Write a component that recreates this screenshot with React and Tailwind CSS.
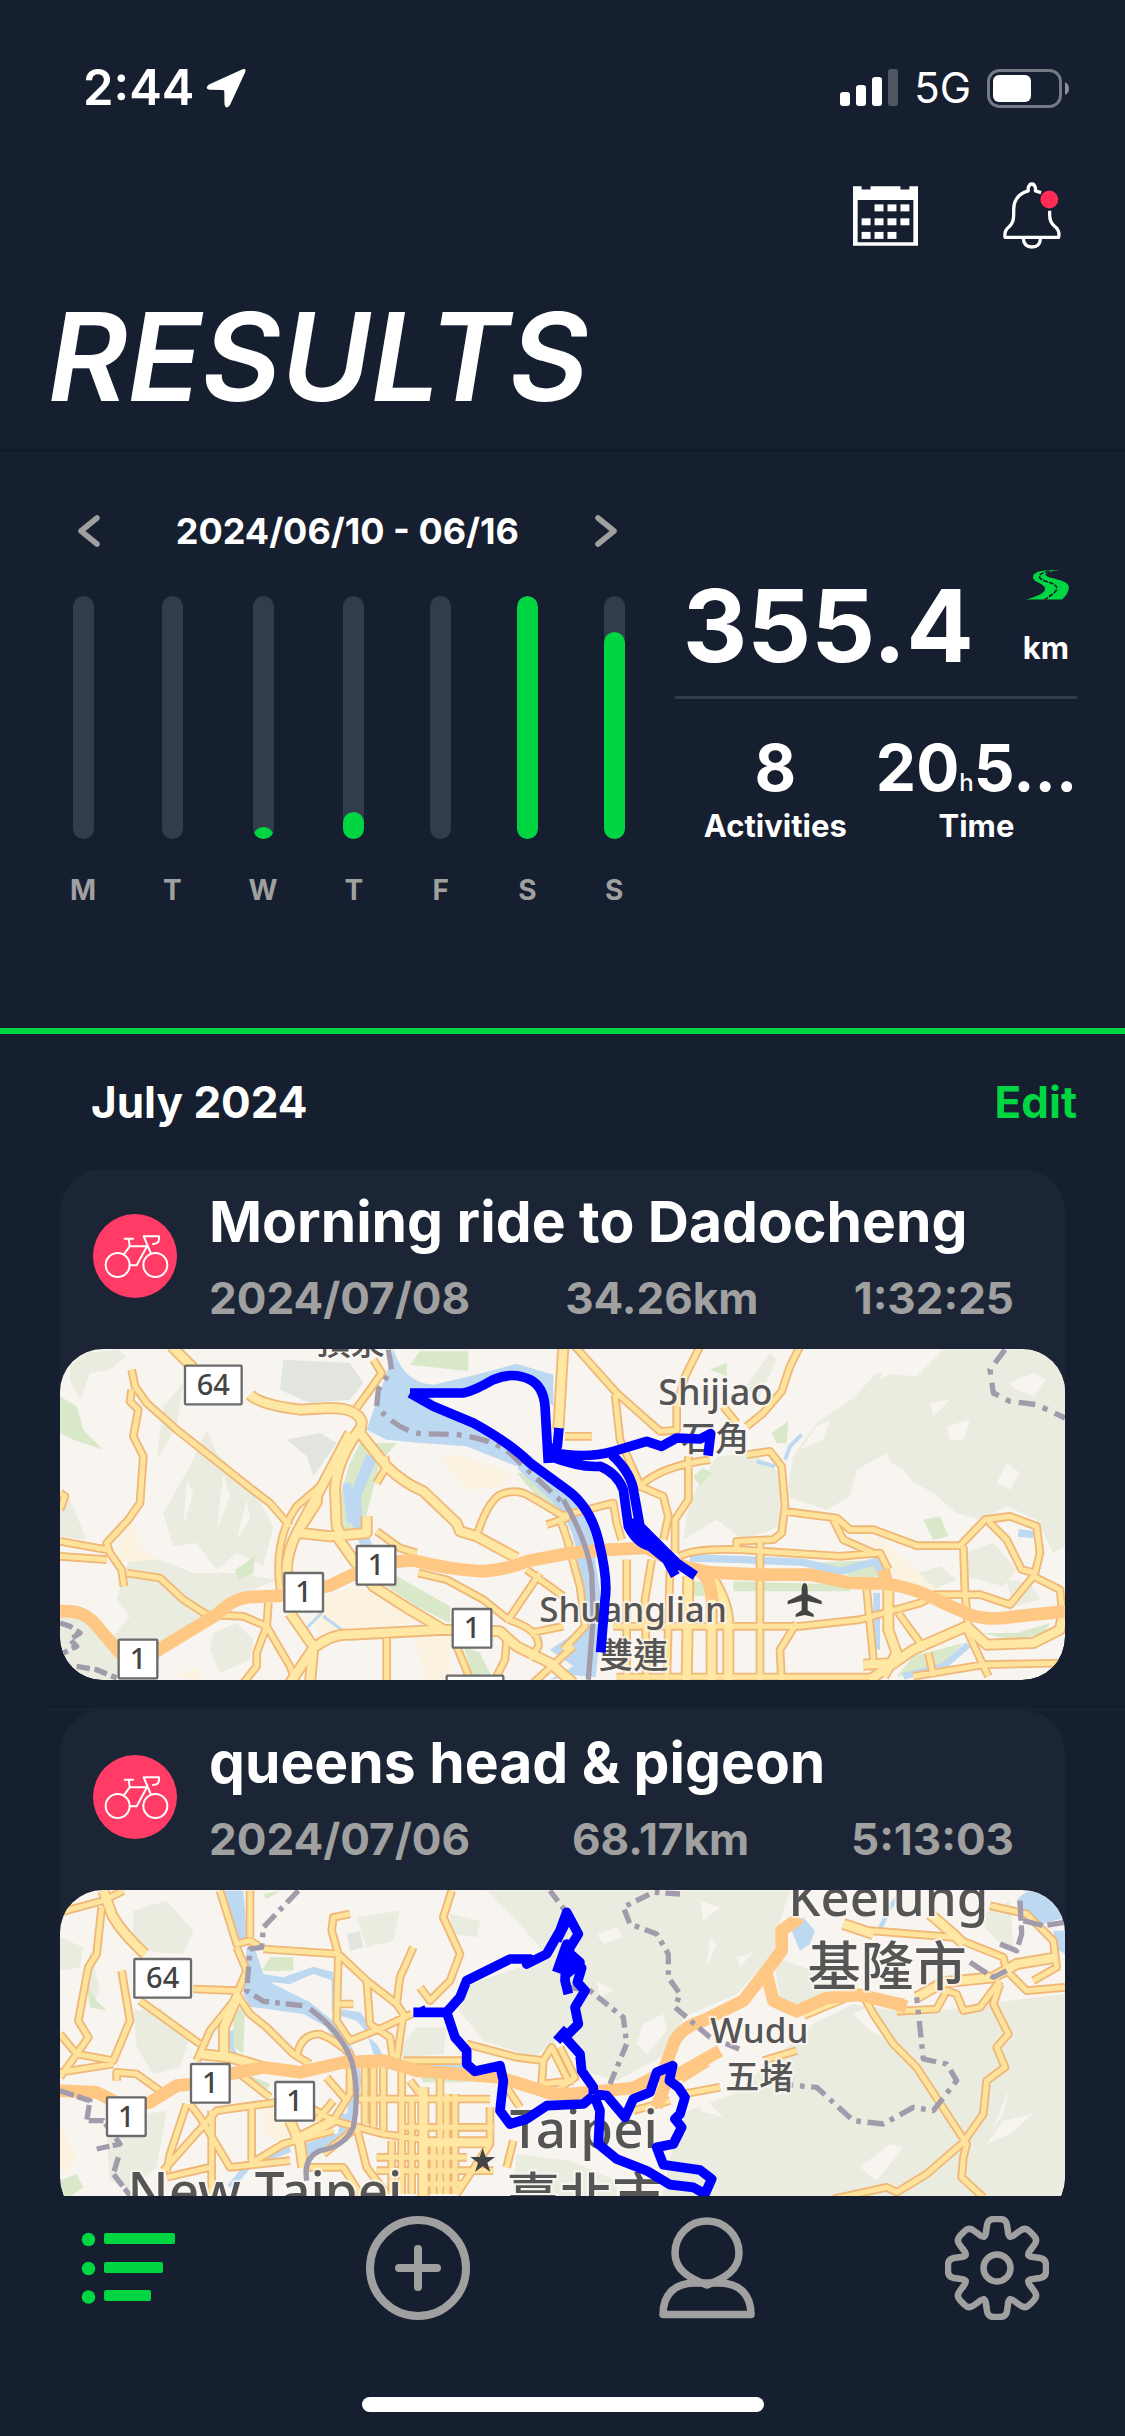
const week = [
  { day: 'M', value: 0 },
  { day: 'T', value: 0 },
  { day: 'W', value: 5 },
  { day: 'T', value: 11 },
  { day: 'F', value: 0 },
  { day: 'S', value: 100 },
  { day: 'S', value: 85 },
]

const dadochengMap = {
  wood: [
    'M30 500 L60 480 L110 600 L30 590Z M60 80 L110 40 L200 30 L230 50 L180 90 L120 100 L90 180 L60 120Z',
    'M340 520 L420 380 L470 270 L500 340 L560 400 L620 470 L670 560 L640 680 L560 640 L500 690 L440 610 L370 620Z',
    'M240 650 L330 660 L430 700 L560 700 L680 720 L560 770 L430 870 L330 930 L320 1020 H60 L30 980 V830 H100 L180 900 L240 830 L200 780Z',
    'M490 880 L560 850 L610 900 L600 960 L510 1000 L480 930Z M320 360 L340 200 L400 130 L380 260Z',
    'M2410 175 L2480 100 L2600 110 L2680 30 H3045 V620 L3010 640 L2960 540 L2870 500 L2790 540 L2720 520 L2650 460 L2540 400 L2510 340 L2420 390 L2400 470 L2330 510 L2210 470 L2230 350 L2300 250Z',
    'M1900 600 L1920 480 L2000 350 L2110 340 L2190 400 L2190 560 L2080 600 L2000 540Z M2080 150 L2160 40 L2180 60 L2120 190Z',
    'M2740 640 L2830 610 L2900 690 L2860 740 L2750 710Z M2610 700 L2670 680 L2720 720 L2650 750Z M2870 720 L2940 730 L2970 780 L2890 800Z',
  ],
  clearing: [
    'M2510 60 L2560 50 L2540 90 L2490 120Z M2875 130 L2950 100 L2990 120 L2950 170 L2900 150Z',
    'M2510 360 L2560 390 L2600 440 L2660 470 L2600 470 L2530 420Z M2690 260 L2760 240 L2740 300 L2700 300Z',
    'M2300 260 L2340 240 L2320 300 L2250 330Z M2870 370 L2910 400 L2880 450 L2840 430Z M2640 190 L2700 180 L2650 230Z',
    'M410 420 L430 460 L400 560Z M520 400 L540 470 L500 570Z M590 480 L600 540 L560 600Z',
  ],
  urban: ['M700 60 L900 70 L940 130 L900 180 L780 190 L690 150Z', 'M710 300 L810 280 L860 310 L790 410 L770 350Z'],
  sand: [
    'M210 560 L250 550 L270 620 L320 660 L200 670Z',
    'M1170 350 L1220 345 L1390 400 L1350 440 L1250 450Z',
    'M800 780 L920 740 L1130 840 L900 880 L800 900Z M1090 890 H1200 V1020 H1130Z M380 1010 L445 980 V1020Z',
    'M2430 580 L2500 600 L2660 750 L2560 740Z',
  ],
  park: [
    'M1110 35 H1255 V95 L1080 75Z',
    'M30 170 L80 200 L100 270 L160 330 L70 300 L30 280Z',
    'M555 690 L615 650 L610 700 L565 720Z',
    'M930 310 L1040 310 L990 370 L940 560 L880 570 L870 470 L900 370Z',
    'M1040 710 L1200 800 V850 L1100 800 L1010 740Z M1240 920 L1290 940 L1330 1020 H1270Z',
    'M1400 400 L1440 400 L1550 520 L1520 540Z',
    'M1980 90 L2030 70 V110Z M2165 280 L2215 245 L2210 310 L2180 310Z',
    'M1930 410 L1960 385 L1985 400 L1950 440Z M2620 540 L2670 530 L2695 590 L2650 600Z',
    'M1910 730 L1980 720 V770 H1920Z M2050 725 L2400 735 V755 H2050Z M2270 670 L2490 660 V710 L2420 715Z',
    'M2800 880 L2900 880 L3000 850 L2980 885 L2880 900Z M2590 950 L2740 910 L2660 990 L2540 1010Z',
  ],
  waterFill: [
    'M1030 27 Q1060 130 1150 135 Q1270 110 1400 72 L1510 105 L1510 200 L1485 180 Q1470 110 1390 110 L1250 165 L1140 170 L1180 215 L1300 260 L1440 370 L1400 380 L1250 320 L1110 310 L1010 300 L950 270 L985 170 L1010 100Z',
    'M1500 930 L1560 890 L1620 860 L1620 1000 L1500 1020 L1570 980Z',
  ],
  waterLines: [
    ['M1420 365 L1530 470 Q1610 560 1610 680 L1630 800 L1610 1010', 55],
    ['M965 350 L915 470 L920 540 L950 620', 34],
    ['M890 430 L905 550', 26],
    ['M1920 655 L2080 660 L2260 668 L2370 695 L2480 665 L2500 720', 22],
    ['M2480 760 L2480 930', 20],
    ['M2560 1010 L2680 980 L2755 915', 20],
    ['M2255 285 L2220 320 L2205 360 M2120 365 L2175 380', 12],
    ['M2905 580 L2950 585', 22],
    ['M815 820 L770 865 M820 830 L875 870', 9],
  ],
  trunk: [
    'M30 815 C90 810 120 830 150 870 L210 940 H310 L500 825 Q550 775 600 772 L700 768 L840 738 L980 670 L1090 662 Q1200 690 1300 695 Q1370 690 1430 665 L1560 640 L1680 630 L1790 625 L1900 680 L1980 698 L2130 705 L2280 705 L2400 730 L2510 732 Q2600 745 2680 790 L2760 825 Q2820 845 2900 830 L3045 815',
    'M1940 690 Q1985 710 1985 780 M2515 740 L2500 690',
  ],
  major: [
    'M600 165 Q630 195 750 210 L840 205 Q920 205 935 245 L930 290',
    'M935 260 Q860 360 855 450 L860 560 L880 600',
    'M750 580 L840 590 L950 580 V530',
    'M930 280 L1010 380 Q1060 430 1120 455 L1220 550 L1230 575 L1280 590 L1400 655',
    'M365 20 L430 85',
    'M860 590 L910 660 L970 740 L1080 810 L1180 870',
    'M790 925 Q850 880 900 885 L1180 870 L1350 875 L1400 920 L1500 970 L1570 1030',
    'M720 820 L790 920 L780 1030 M790 925 L720 1030',
    'M710 700 Q710 640 740 580 L810 450 L900 280',
    'M1540 20 L1525 270',
    'M1990 720 Q2035 790 2035 860 V1030 M1915 710 L1910 1030 M1985 780 V1030',
    'M2460 1020 L2590 930 L2750 860 L2810 915 L2950 910 L3030 870 L3040 820',
    'M2515 740 L2515 870 L2540 940 L2500 1010 M2540 970 L2440 975',
  ],
  minor: [
    'M245 90 L255 140 L290 190 L380 270 L620 460 L660 490 L720 560',
    'M245 150 L240 185 L265 210 L250 290 L280 350 L270 490 L235 540 L170 610 L180 640 L215 690 L222 740',
    'M30 605 L170 630 M30 650 L170 660 M30 460 L45 470 L30 510',
    'M230 700 L330 715 L400 780 L470 825 L580 830 L650 860 L720 980 L740 1030',
    'M655 790 L650 860 L620 940 L620 980 L580 1030',
    'M690 750 Q670 600 740 500 L810 440 L805 490 L760 560',
    'M970 60 L995 100 L960 150 L920 205',
    'M1005 350 L1010 380 L980 430',
    'M980 575 L1050 625 L1100 640',
    'M1280 590 Q1310 490 1350 465 Q1400 445 1440 470 L1550 535 L1490 555 M1530 540 L1560 620',
    'M1105 700 L1190 720 L1300 780 L1375 840 M1375 840 L1470 700 M1430 690 L1540 770',
    'M1375 840 Q1470 870 1465 920 L1440 960 M1370 900 L1365 960 L1330 1030 M1450 1030 L1570 920 M1440 880 L1540 860',
    'M1220 920 L1265 1030 M1010 895 V1030',
    'M1575 20 L1700 160 L1830 275 L1880 272 V200 L1905 110 L1950 20',
    'M1695 165 L1710 300 L1770 435 M1545 290 H1625',
    'M2250 20 L2220 80 L2195 155 L2140 220 L2090 260 M2020 200 L2060 250',
    'M2090 345 L2160 335 L2195 380 L2205 500 L2195 580 L2170 600 L2060 605 V630',
    'M1980 360 Q1830 380 1770 440 L1840 470 L1855 530 L1840 600 M1915 350 V480 L1875 540 V640',
    'M1530 530 L1690 490 L1700 550 L1715 600 M1540 560 L1590 740 L1605 860 L1540 930',
    'M1890 650 Q1930 625 2070 630 L2370 650 L2490 640 L2515 690 M2130 600 V1030',
    'M2205 515 L2280 525 L2360 535 L2400 570 L2470 570 L2600 618 H2730 L2805 540 L2880 530 L2960 560 L2970 640 L2955 700 L2915 690 L2870 600 L2815 545',
    'M2350 540 L2380 600 L2470 640 M2740 620 L2745 760 L2755 860',
    'M2650 765 H2790 L2880 795 L2950 710 L3030 750 L3035 800',
    'M1730 660 V1030 M1805 660 L1785 780 L1790 1030 M1860 690 L1850 1030',
    'M1690 860 H2250 L2430 840 L2610 790 L2650 770 M1700 1012 H2480',
    'M2240 850 L2190 930 L2195 1030 M2450 750 L2470 960',
    'M2545 820 L2625 930 M2750 870 L2815 1010 M2590 1010 L2800 975 L3045 970 M2635 940 L2650 1010',
  ],
  borders: [
    ['M1015 30 L1025 90 L985 150 L980 200 Q1040 270 1110 282 L1220 285 Q1350 300 1400 360 L1550 500', '60 24 14 24'],
    ['M1540 480 Q1610 600 1625 700 L1630 830 L1615 1020', 'none'],
    ['M2865 30 L2820 90 L2830 160 L2880 185 L2960 195 L3045 235', '50 24 16 24'],
    ['M30 850 L60 860 L90 880 L60 900 L80 920 L40 940 M80 980 L140 990 L200 1015', '40 14'],
  ],
  route: [
    'M1080 160 L1240 160 Q1270 155 1330 120 Q1390 95 1440 120 Q1480 140 1485 200 L1495 370',
    'M1080 160 L1150 200 L1270 250 Q1380 310 1440 370 L1550 450 Q1620 500 1645 600 Q1675 720 1665 780 L1652 938',
    'M1527 265 L1522 320 L1495 335 Q1600 360 1690 335 L1790 305 L1835 320 L1880 295 L1950 298 L1982 282 L1974 348',
    'M1500 350 Q1590 385 1650 380 Q1700 400 1720 450 L1735 560 Q1760 610 1800 620 L1850 660 L1876 708',
    'M1685 345 Q1745 400 1752 460 L1770 560 L1830 620 L1880 670 L1936 708',
    'M1740 540 L1765 600 L1820 632 L1870 680',
    'M1740 560 L1790 610 L1860 650 L1885 690',
  ],
  badges: [
    { x: 402, y: 75, w: 176, text: '64' },
    { x: 700, y: 697, w: 122, text: '1' },
    { x: 917, y: 616, w: 122, text: '1' },
    { x: 1205, y: 805, w: 122, text: '1' },
    { x: 203, y: 897, w: 122, text: '1' },
    { x: 1187, y: 1005, w: 176, text: '' },
  ],
  labels: [
    { x: 1996, y: 197, size: 108, text: 'Shijiao' },
    { x: 1996, y: 335, size: 102, text: '石角' },
    { x: 1749, y: 848, size: 105, text: 'Shuanglian' },
    { x: 1750, y: 985, size: 105, text: '雙連' },
    { x: 902, y: 46, size: 102, text: '頂泉' },
  ],
  marks: ['M2264 730 q8 0 9 20 v14 l42 20 v10 l-42 -10 v28 l18 12 v8 l-27 -6 l-27 6 v-8 l18 -12 v-28 l-42 10 v-10 l42 -20 v-14 q1 -20 9 -20Z'],
}

const pigeonMap = {
  wood: [
    'M250 90 L350 60 L430 150 L400 220 L310 215 L250 160Z M920 110 L1050 90 L1030 180 L950 200Z M1200 100 L1290 120 L1280 170 L1210 160Z',
    'M250 390 L330 380 L420 470 L390 560 L310 580 L260 500Z M30 170 L100 200 L90 260 L30 270Z M120 210 L150 320 L130 380 L100 300Z',
    'M170 780 L290 700 L350 690 L320 860 L240 930 L180 900Z M1050 500 L1100 440 L1190 440 L1180 520 L1060 530Z',
    'M1220 380 L1260 310 L1440 250 L1500 230 L1545 330 L1560 450 L1450 530 L1300 480Z',
    'M1310 30 H2220 L2190 120 L2170 220 L2060 340 L1900 410 L1850 520 L1700 600 L1600 570 L1530 400 L1470 200 L1400 120Z',
    'M1820 1020 L1890 700 L2050 640 L2290 430 L2410 370 L2600 400 L2800 370 L3045 340 V1020Z',
    'M2170 230 L2260 260 L2430 330 L2230 370 L2190 350Z M1400 820 L1560 840 L1700 900 V1020 H1380Z',
    'M2780 110 L2880 60 L2890 200 L2840 180Z',
  ],
  clearing: [
    'M1640 160 L1700 140 L1720 170 L1660 190Z M1980 170 L2000 190 L1970 260Z M2060 230 L2110 215 L2070 260Z',
    'M1780 430 L1840 400 L1850 450 L1790 520 L1760 490Z M1640 300 L1690 330 L1650 350Z',
    'M2430 860 L2520 790 L2560 800 L2480 900Z M2810 790 L2860 720 L2950 700 L2880 760Z M1960 650 L2020 710 L1950 690Z',
    'M2410 400 L2450 380 L2500 470 L2460 450Z M2880 620 L2860 700 L2830 740Z M1950 60 L2010 80 L1960 120Z',
  ],
  urban: ['M890 160 L930 150 L940 200 L900 210Z'],
  sand: ['M30 720 L80 830 L50 880 L30 870Z', 'M640 680 L730 700 L700 790 L640 760Z'],
  park: [
    'M660 230 H730 V270 H635Z M640 40 L690 30 L650 55Z',
    'M550 390 L585 380 L580 520 L550 500Z',
    'M110 310 L140 360 L170 390 L120 380Z M30 900 L80 880 L100 920 L60 948 H30Z',
    'M590 580 L660 610 L650 630Z M1110 590 H1260 L1250 605 H1120Z',
  ],
  waterFill: [
    'M515 30 H580 L592 180 L562 182Z',
    'M590 200 L615 205 L640 280 L700 290 L790 258 L850 275 V300 L790 280 L720 310 L660 305 L780 365 L860 430 L850 450 L760 400 L600 378 L580 340Z',
    'M865 385 L930 395 L960 430 L950 455 L920 420 L870 405Z M955 470 L980 490 L1005 535 L970 520Z',
    'M2900 60 Q2920 30 2960 28 H3030 L3045 110 L2980 130 Q2900 110 2900 60Z M3010 150 L3045 150 V220 L3020 205Z',
    'M2220 140 L2260 110 L2295 150 L2280 190 L2250 210Z',
  ],
  waterLines: [
    ['M840 430 Q915 520 918 600 L905 710', 30],
    ['M890 700 L880 770 L800 795 L760 810', 34],
    ['M720 805 L640 835 L590 860 L540 920', 20],
    ['M850 290 L850 390', 10],
    ['M545 450 L545 500 L570 550', 12],
    ['M2550 40 L2520 80 L2490 145', 14],
    ['M1080 558 L1260 560', 12],
  ],
  trunk: [
    'M30 630 L140 635 L230 680 L300 665 L380 615 L430 610 L540 580 L640 560 L750 575 L880 545 L1000 540 L1100 570 L1350 590 L1500 638 L1560 640 L1750 622 L1840 575 L1870 490 Q1890 440 1960 420 L2080 360 L2150 270 L2195 210 V150 L2250 110',
    'M1820 680 L1850 600 L2010 510 M1890 590 L1970 540',
    'M2150 280 L2170 360 L2240 392 L2330 352 L2430 342 L2570 378',
  ],
  major: [
    'M160 30 L185 100 Q210 150 285 220',
    'M450 520 L540 530 L640 560 M565 340 L522 440 L522 520',
    'M2380 130 L2470 160 M2640 100 L2710 160 L2740 190',
    'M2600 350 L2680 305 L2830 290 L2900 250 L3020 230',
    'M2430 345 L2560 372 M2260 400 L2380 350',
    'M720 720 L750 790 L760 860 M730 780 L850 720',
    'M1120 620 V950 M1110 785 H1320',
  ],
  minor: [
    'M30 95 L160 60 L220 30 M155 80 L140 220 L115 260 L85 420 L115 470 L80 520 L30 590',
    'M30 460 L80 520 L190 540 L240 420 L215 270 M270 360 L450 490 M430 325 L560 330',
    'M510 30 L560 190 L600 180 L625 195 M600 30 V170 M560 200 L590 270 L560 340 L600 400 L650 440 L730 520 L780 550',
    'M440 540 L480 450 L560 350 M30 575 L190 550',
    'M900 100 L850 110 L845 150 L865 220 L860 420 L900 480 L1000 440 L1085 400',
    'M640 205 L865 220 L950 300 L1040 370 L1060 400 L1040 540 M865 370 H910',
    'M1090 200 L1050 290 L1040 370 M950 300 L960 430 L1020 470 L1030 540',
    'M1205 30 L1180 110 L1230 220 L1200 300 L1140 360 L1110 320',
    'M740 530 Q750 460 810 460 Q860 480 900 520 V640 L850 720',
    'M200 600 V575 L260 580 L330 630 M420 670 L450 710 L540 860 L720 840',
    'M340 870 L500 690 L680 665 M410 670 L360 820 L350 870 M485 690 V940 M605 680 V840 M350 890 L480 860',
    'M570 580 L660 650 M780 680 L850 720 L1000 760 L1110 775 M600 850 L700 790 L850 750',
    'M760 860 L880 860 L930 940 M820 820 L920 740 L950 860 L1010 940 M850 660 L800 720 M830 590 L890 660',
    'M945 560 V730 M970 560 V740 M1000 560 V750 M1055 570 V940 M1025 780 V940 M1080 600 L1110 640 M1085 660 V940 M1170 560 V940 M1190 640 V940 M1215 640 V940 M1150 790 V940',
    'M920 655 H1320 M1060 740 H1330 M980 830 H1250 M980 870 H1330 M1120 910 H1240 M1320 680 V790 L1220 940 M1390 780 L1370 860',
    'M1060 540 H1240 M1250 490 L1400 530 L1480 540 L1505 500 L1560 610 M1480 540 L1475 610 L1570 600 M1370 620 L1410 680',
    'M1530 500 L1575 590 L1530 620 M1900 640 L2010 620 M2140 540 L2240 510 M1750 690 L1860 660',
    'M2440 345 L2470 400 L2530 490 L2600 560 L2750 790 L2740 830 L2735 890 L2800 950',
    'M2850 310 L2830 370 L2875 460 L2840 500 L2865 560 L2810 600 L2800 700 L2740 785 L2630 880 L2540 935 L2510 920 L2350 955',
    'M2460 150 L2710 170 L2860 230 L2870 270 L2930 330 L3045 320 M2820 75 L2930 100 L3010 180 L3020 260 L2950 300',
    'M2540 392 L2660 385 L2690 330 L2720 340 L2740 390 L2790 380 L2850 300',
  ],
  borders: [
    ['M745 30 L640 140 L635 200 L600 205 L590 330 L640 362 L760 375', '50 18 14 18'],
    ['M780 385 Q870 450 905 540 Q930 640 910 740 Q880 800 810 810 Q760 830 770 900', 'none'],
    ['M1890 40 L1810 35 L1720 80 L1740 130 L1820 160 L1855 220 V290 L1890 340 L1875 380 L1980 470 L2080 510', '44 18 14 18'],
    ['M1500 30 L1560 110 M1560 320 L1620 330 L1720 410 L1730 490 L1680 610', '40 18 14 18'],
    ['M2180 610 L2300 620 L2410 720 L2500 730 L2590 680 L2650 690 L2720 600 L2690 550 L2620 535 L2600 350', '50 20 14 20'],
    ['M2910 60 L2915 160 L2900 210 L2850 190 M2760 245 L2830 290 L2870 270 M2920 120 L2980 135 L3045 125', '60 14'],
    ['M30 630 L120 660 L110 720 L160 720 L210 790 L140 805 M205 830 L190 880 L240 945', '44 10'],
  ],
  route: [
    'M1090 395 L1190 395 L1230 350 L1250 300 L1380 235 L1440 235 L1430 250 L1490 220 L1530 150 L1550 95 L1585 160 L1560 200 L1550 250 L1595 262 L1582 305 L1605 330 L1575 380 L1585 430 L1545 470 L1590 520 L1595 570 L1630 620 V640',
    'M1110 380 L1120 400 M1520 180 L1550 120 M1520 275 L1550 190 L1545 300 L1555 340 M1550 210 L1590 245 L1550 280 M1520 480 L1552 445',
    'M1190 395 L1215 470 L1250 510 V550 L1275 572 L1350 555 L1360 600 L1350 690 L1380 730 L1430 715 L1490 675 L1600 670 L1630 645',
    'M1630 640 L1650 690 L1645 790 L1700 835 L1790 870 L1860 912 L1930 920 L1965 940 L1985 895 L1950 868 L1840 852 L1820 800 L1870 790 L1895 740 L1875 715 L1890 700 L1905 650 L1885 620 L1858 600 L1868 555 L1820 575 L1800 635 L1750 655 L1725 710 L1670 645 L1630 640',
  ],
  badges: [
    { x: 250, y: 232, w: 176, text: '64' },
    { x: 168, y: 647, w: 122, text: '1' },
    { x: 420, y: 547, w: 122, text: '1' },
    { x: 673, y: 601, w: 122, text: '1' },
  ],
  labels: [
    { x: 645, y: 988, size: 159, text: 'New Taipei' },
    { x: 1602, y: 802, size: 159, text: 'Taipei' },
    { x: 1608, y: 1010, size: 159, text: '臺北市' },
    { x: 2515, y: 106, size: 153, text: 'Keelung' },
    { x: 2512, y: 315, size: 159, text: '基隆市' },
    { x: 2128, y: 487, size: 105, text: 'Wudu' },
    { x: 2128, y: 624, size: 102, text: '五堵' },
  ],
  marks: ['M1298 802 l9 27 h28 l-23 17 l9 28 l-23 -17 l-23 17 l9 -28 l-23 -17 h28Z'],
}

const rides = [
  { title: 'Morning ride to Dadocheng', date: '2024/07/08', distance: '34.26km', time: '1:32:25', map: dadochengMap },
  { title: 'queens head & pigeon', date: '2024/07/06', distance: '68.17km', time: '5:13:03', map: pigeonMap },
]

function RouteMap({ map, title }) {
  const all = (list) => list.join(' ')
  return (
    <svg
      viewBox="30 28 3015 993"
      role="img"
      aria-label={`Map of ${title}`}
      className="block w-full h-auto rounded-[43px] bg-[#f8f4f0]"
      fill="none"
      strokeLinejoin="round"
    >
      <path d={all(map.wood)} fill="#e9ecdf" />
      <path d={all(map.clearing)} fill="#f8f4f0" />
      <path d={all(map.urban)} fill="#e1e5de" />
      <path d={all(map.sand)} fill="#fbf3df" />
      <path d={all(map.park)} fill="#d9e8c9" />
      <path d={all(map.waterFill)} fill="#bdd8f1" />
      {map.waterLines.map(([d, w]) => <path key={d} d={d} stroke="#bdd8f1" strokeWidth={w} />)}
      <path d={all(map.minor)} stroke="#f0b878" strokeWidth="26" />
      <path d={all(map.major)} stroke="#f0b878" strokeWidth="36" />
      <path d={all(map.minor)} stroke="#fee39c" strokeWidth="15" />
      <path d={all(map.major)} stroke="#fee8a3" strokeWidth="25" />
      <path d={all(map.trunk)} stroke="#ffc784" strokeWidth="38" />
      {map.borders.map(([d, dash]) => (
        <path key={d} d={d} stroke="#a29bab" strokeWidth="16" strokeDasharray={dash} />
      ))}
      {map.badges.map((b) => (
        <g key={`${b.x}-${b.y}`}>
          <rect x={b.x + 3} y={b.y + 3} width={b.w - 6} height="116" rx="3" fill="#fff" stroke="#6b6b6b" strokeWidth="7" />
          <text x={b.x + b.w / 2} y={b.y + 91} textAnchor="middle" fontSize="87" fill="#444" className="font-['Noto_Sans',sans-serif] font-medium">
            {b.text}
          </text>
        </g>
      ))}
      {map.labels.map((l) => (
        <text
          key={l.text}
          x={l.x}
          y={l.y}
          textAnchor="middle"
          fontSize={l.size}
          fill="#555"
          stroke="#fbf8f4"
          strokeWidth="14"
          strokeOpacity="0.7"
          paintOrder="stroke"
          className="font-['Noto_Sans','Noto_Sans_CJK_TC',sans-serif] font-medium"
        >
          {l.text}
        </text>
      ))}
      <path d={all(map.marks)} fill="#444" />
      <path d={all(map.route)} stroke="#0000ff" strokeWidth="29" />
    </svg>
  )
}

function StatusBar() {
  return (
    <div className="flex h-12 items-center justify-between pl-[83px] pr-14">
      <div className="flex items-center gap-3">
        <span className="text-[49px] leading-12 font-semibold">2:44</span>
        <svg viewBox="0 0 40 40" className="size-10" fill="currentColor">
          <path d="M36 1.400Q41 -.5 39 4.500L24 37Q20 42 18.500 36.500L18.300 23.500Q18.300 22 17 22L4 21.800Q-2 21 3 16.500Z" />
        </svg>
      </div>
      <div className="flex items-center gap-4">
        <svg viewBox="0 0 58 38" className="h-[38px] w-[58px]" fill="currentColor">
          <rect x="0" y="23" width="10" height="14" rx="3" />
          <rect x="16" y="16" width="10" height="21" rx="3" />
          <rect x="32" y="8" width="10" height="29" rx="3" />
          <rect x="48" y="0" width="10" height="37" rx="3" opacity=".25" />
        </svg>
        <span className="text-[42px] leading-12">5G</span>
        <svg viewBox="0 0 82 39" className="h-[39px] w-[82px]">
          <rect x="1.500" y="1.500" width="72" height="36" rx="11" fill="none" stroke="#757b86" strokeWidth="3" />
          <rect x="6" y="6" width="38" height="27" rx="6" fill="#fff" />
          <path d="M78 13Q82 15 82 19.500T78 26Z" fill="#8b909a" />
        </svg>
      </div>
    </div>
  )
}

function CalendarIcon() {
  const cells = [
    [132, 460], [171, 460], [210, 460],
    [93, 502], [132, 502], [171, 502], [210, 502],
    [93, 543], [132, 543], [171, 543],
  ]
  return (
    <svg viewBox="67 405 196 180" className="h-[60px] w-[65px]" fill="currentColor">
      <path fillRule="evenodd" d="M67 405H93V415H120V405H210V415H237V405H263V585H67ZM81 447V574H249V447Z" />
      {cells.map(([x, y]) => <rect key={`${x}-${y}`} x={x} y={y} width="27" height="21" />)}
    </svg>
  )
}

function BellIcon() {
  return (
    <svg viewBox="519 397 175 203" className="h-[67px] w-[58px]" fill="none" stroke="currentColor" strokeWidth="10" strokeLinejoin="round">
      <path d="M634 429L617 424V415Q614 403 606 403Q598 403 595 415V424Q551 437 551 480V497Q551 520 538 532Q521 545 525 565H687Q692 545 676 532Q660 520 660 497V484" />
      <path d="M580 568Q582 594 606 594Q631 594 632 568" />
      <circle cx="659" cy="450" r="27" fill="#ff2d55" stroke="none" />
    </svg>
  )
}

function ArrowIcon({ d }) {
  return (
    <svg viewBox="0 0 22 32" className="h-8 w-[22px]" fill="none" stroke="#a0a0a0" strokeWidth="5.500" strokeLinecap="round" strokeLinejoin="round">
      <path d={d} />
    </svg>
  )
}

function RoadIcon() {
  return (
    <svg viewBox="1157 210 130 90" className="h-[30px] w-[43px]" fill="none">
      <path d="M1258 211C1200 208 1178 216 1178 232C1180 248 1214 250 1215 266C1214 282 1180 292 1157 299H1266C1284 284 1288 268 1286 258C1278 236 1220 236 1216 224C1216 214 1240 212 1258 211Z" fill="#00d542" />
      <path d="M1228 213C1190 220 1190 234 1214 243C1250 252 1262 264 1238 282L1212 301" stroke="#161f2f" strokeWidth="5" strokeDasharray="14 4" />
    </svg>
  )
}

function BikeIcon() {
  return (
    <svg viewBox="24 24 252 252" className="size-21 shrink-0 rounded-full bg-[#ff3b66]" fill="none" stroke="#fff" strokeWidth="6" strokeLinecap="round" strokeLinejoin="round">
      <circle cx="98" cy="177" r="36" />
      <circle cx="211" cy="177" r="36" />
      <path d="M119 98H144M131 98L134 121L116 146M134 121H186L155 178H134M176 91L198 143M176 91H222V99Q221 114 204 114" />
    </svg>
  )
}

function ListIcon() {
  return (
    <svg viewBox="0 0 104 104" className="size-26" fill="currentColor">
      <circle cx="12.500" cy="23.500" r="6.800" />
      <circle cx="12.500" cy="52.500" r="6.800" />
      <circle cx="12.500" cy="81" r="6.800" />
      <rect x="28" y="17" width="71" height="11" rx="2" />
      <rect x="28" y="46" width="59" height="11" rx="2" />
      <rect x="28" y="74" width="47" height="11" rx="2" />
    </svg>
  )
}

function AddIcon() {
  return (
    <svg viewBox="0 0 104 104" className="size-26" fill="none" stroke="currentColor" strokeWidth="8" strokeLinecap="round">
      <circle cx="52" cy="52" r="48" />
      <path d="M33 52H71M52 33V71" />
    </svg>
  )
}

function PersonIcon() {
  return (
    <svg viewBox="0 0 104 104" className="size-26" fill="none" stroke="currentColor" strokeWidth="7.500" strokeLinejoin="round">
      <path d="M52 69C34 62 20 54 20 37A32 32 0 0 1 84 37C84 54 70 62 52 69Z" />
      <path d="M8 98.500C8 80 18 67 40 67H64C86 67 96 80 96 98.500Z" />
    </svg>
  )
}

function GearIcon() {
  return (
    <svg viewBox="-52 -52 104 104" className="size-26" fill="none" stroke="currentColor" strokeWidth="6.500" strokeLinecap="round">
      <circle r="13.500" />
      {[0, 45, 90, 135, 180, 225, 270, 315].map((angle) => (
        <path
          key={angle}
          transform={`rotate(${angle})`}
          d="M-13 -31.500Q-11 -33 -11 -36L-10 -43Q-9 -49 -3 -49H3Q9 -49 10 -43L11 -36Q11 -33 13 -31.500"
        />
      ))}
    </svg>
  )
}

function WeekChart() {
  return (
    <div>
      <div className="flex h-12 items-center justify-between px-2.5">
        <button aria-label="Previous week"><ArrowIcon d="M19 3L3 16L19 29" /></button>
        <span className="text-4xl leading-12 font-bold whitespace-nowrap">2024/06/10 - 06/16</span>
        <button aria-label="Next week"><ArrowIcon d="M3 3L19 16L3 29" /></button>
      </div>
      <div className="mt-[41px] flex justify-between px-0.5">
        {week.map((d, i) => (
          <div key={i} className="flex flex-col items-center">
            <div className="flex h-[243px] w-[21px] items-end overflow-hidden rounded-full bg-[#333c4b]">
              <div className="w-full rounded-t-full bg-[#00d542]" style={{ height: `${d.value}%` }} />
            </div>
            <span className="mt-[31px] text-[28px] leading-10 font-bold text-[#a0a0a0]">{d.day}</span>
          </div>
        ))}
      </div>
    </div>
  )
}

function Totals() {
  return (
    <div className="pt-[63px]">
      <div className="flex justify-between border-b-3 border-[#333c4b] px-2 pb-5">
        <span className="mt-1.5 text-[100px] leading-[100px] font-bold">355.4</span>
        <div className="flex flex-col items-end">
          <RoadIcon />
          <span className="mt-7 text-[31px] leading-10 font-bold">km</span>
        </div>
      </div>
      <div className="mt-[37px] grid grid-cols-2 text-center font-bold">
        <div>
          <div className="text-[64px] leading-16">8</div>
          <div className="mt-1.5 text-[31px] leading-10">Activities</div>
        </div>
        <div>
          <div className="text-[64px] leading-16 whitespace-nowrap">
            20<span className="text-2xl font-medium">h</span>5...
          </div>
          <div className="mt-1.5 text-[31px] leading-10">Time</div>
        </div>
      </div>
    </div>
  )
}

function RideCard({ ride }) {
  return (
    <li className="ml-12 border-b border-[#1d2737] pr-[60px] pb-[29px] pl-3">
      <article className="overflow-hidden rounded-[43px] bg-[#1b2536]">
        <div className="flex items-center gap-8 pt-[21px] pr-[51px] pb-[27px] pl-[33px]">
          <BikeIcon />
          <div className="min-w-0 flex-1">
            <h3 className="text-[57px] leading-16 font-bold whitespace-nowrap">{ride.title}</h3>
            <div className="mt-5 flex justify-between text-[44px] leading-12 font-bold text-[#a0a0a0]">
              <span>{ride.date}</span>
              <span>{ride.distance}</span>
              <span>{ride.time}</span>
            </div>
          </div>
        </div>
        <RouteMap map={ride.map} title={ride.title} />
      </article>
    </li>
  )
}

export default function App() {
  return (
    <div className="flex h-screen flex-col bg-[#161f2f] font-['Inter',sans-serif] text-white">
      <header className="shrink-0 border-b border-[#10161f] pt-16">
        <StatusBar />
        <div className="mt-[70px] flex h-[67px] items-center justify-end gap-[85px] pr-16">
          <button aria-label="Calendar"><CalendarIcon /></button>
          <button aria-label="Notifications"><BellIcon /></button>
        </div>
        <h1 className="mt-12 pb-[33px] pl-12 text-[122px] leading-[120px] font-semibold italic">RESULTS</h1>
      </header>

      <section className="grid shrink-0 grid-cols-[25fr_18fr] gap-12 border-b-6 border-[#00d542] pt-14 pr-12 pb-[118px] pl-[68px]">
        <WeekChart />
        <Totals />
      </section>

      <main className="min-h-0 flex-1 overflow-hidden">
        <div className="flex justify-between pt-11 pr-12 pb-[43px] pl-[91px] text-[44px] leading-12 font-bold">
          <h2>July 2024</h2>
          <button className="text-[#00d542]">Edit</button>
        </div>
        <ul>
          {rides.map((ride) => <RideCard key={ride.date} ride={ride} />)}
        </ul>
      </main>

      <nav className="shrink-0 pt-5 pb-6">
        <div className="flex justify-between px-19 text-[#a0a0a0]">
          <a href="#results" aria-label="Results" className="text-[#00d542]"><ListIcon /></a>
          <a href="#add" aria-label="Add"><AddIcon /></a>
          <a href="#profile" aria-label="Profile"><PersonIcon /></a>
          <a href="#settings" aria-label="Settings"><GearIcon /></a>
        </div>
        <div className="mx-auto mt-[77px] h-[15px] w-[402px] rounded-full bg-white" />
      </nav>
    </div>
  )
}
